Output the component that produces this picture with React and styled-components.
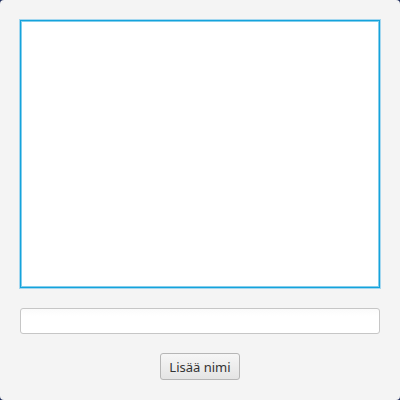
import React, { useState } from "react";
import styled, { createGlobalStyle } from "styled-components";

const GlobalStyle = createGlobalStyle`
  html, body {
    margin: 0;
    padding: 0;
    background: #1f2d5c;
  }
  * {
    box-sizing: border-box;
  }
`;

// ikkuna, pyöristetyt kulmat näyttävät tumman taustan
const Window = styled.div`
  width: 400px;
  height: 400px;
  background: #f4f4f4;
  border-radius: 4px;
  padding: 20px;
  display: flex;
  flex-direction: column;
  align-items: stretch;
  font-family: "Noto Sans", "Open Sans", sans-serif;
`;

const ListView = styled.div`
  height: 268px;
  background: #ffffff;
  border: 1px solid #14a3dc;
  box-shadow: 0 0 0 1px rgba(110, 195, 235, 0.6), inset 0 0 0 1px rgba(30, 165, 220, 0.55);
  overflow: auto;
`;

const NameField = styled.input`
  margin-top: 20px;
  height: 26px;
  width: 100%;
  border: 1px solid #c6c6c6;
  border-radius: 3px;
  background: linear-gradient(#fbfbfb, #ffffff 30%);
  padding: 0 7px;
  font-family: inherit;
  font-size: 13px;
  color: #333;
  outline: none;
`;

const ButtonRow = styled.div`
  margin-top: 19px;
  display: flex;
  justify-content: center;
`;

const Button = styled.button`
  width: 80px;
  height: 27px;
  border: 1px solid #b6b6b6;
  border-radius: 3px;
  background: linear-gradient(#f6f6f6, #e4e4e4);
  font-family: inherit;
  font-size: 13px;
  color: #333;
  padding: 0;
  cursor: pointer;
`;

export default function App() {
  const [names, setNames] = useState([]);
  const [name, setName] = useState("");

  const add = () => {
    if (name.trim()) {
      setNames([...names, name.trim()]);
      setName("");
    }
  };

  return (
    <>
      <GlobalStyle />
      <Window>
        <ListView>
          {names.map((n, i) => (
            <div key={i}>{n}</div>
          ))}
        </ListView>
        <NameField value={name} onChange={(e) => setName(e.target.value)} />
        <ButtonRow>
          <Button onClick={add}>Lisää nimi</Button>
        </ButtonRow>
      </Window>
    </>
  );
}
